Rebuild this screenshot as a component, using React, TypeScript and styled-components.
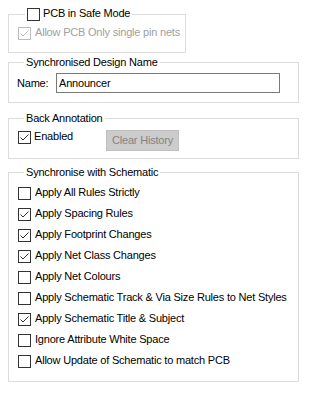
import React from 'react';
import styled, { createGlobalStyle } from 'styled-components';

const GlobalStyle = createGlobalStyle`
  html, body {
    margin: 0;
    padding: 0;
    background: #ffffff;
  }
  body {
    font-family: 'Liberation Sans', Arial, sans-serif;
    font-size: 11px;
    letter-spacing: -0.2px;
    color: #000000;
  }
`;

const Page = styled.div`
  width: 314px;
  height: 400px;
  box-sizing: border-box;
  padding: 0 0 0 8px;
  display: flex;
  flex-direction: column;
  background: #ffffff;
`;

const GroupBox = styled.fieldset<{ $w: number; $h: number; $mt: number; $pt: number }>`
  margin: ${(p) => p.$mt}px 0 0 0;
  padding: ${(p) => p.$pt}px 0 0 9px;
  width: ${(p) => p.$w}px;
  height: ${(p) => p.$h}px;
  box-sizing: border-box;
  border: 1px solid #dcdcdc;
  min-width: 0;
  display: flex;
  flex-direction: column;
`;

const Legend = styled.legend<{ $ml?: number }>`
  margin-left: ${(p) => p.$ml ?? 6}px;
  padding: 0 2px;
  height: 14px;
  line-height: 14px;
  display: flex;
  align-items: center;
  white-space: nowrap;
`;

const CheckRow = styled.label<{ $disabled?: boolean }>`
  display: flex;
  align-items: center;
  height: 21px;
  gap: 4px;
  line-height: 13px;
  white-space: nowrap;
  color: ${(p) => (p.$disabled ? '#a0a0a0' : '#000000')};
`;

const CheckText = styled.span`
  margin-top: -2px;
`;

const InlineCheck = styled.label`
  display: flex;
  align-items: center;
  gap: 3px;
  height: 13px;
  line-height: 13px;
`;

const FieldRow = styled.div`
  display: flex;
  align-items: center;
`;

const FieldLabel = styled.span`
  width: 39px;
  margin-left: -1px;
`;

const TextBox = styled.div`
  width: 224px;
  height: 20px;
  box-sizing: border-box;
  border: 1px solid #7a7a7a;
  padding: 0 2px;
  line-height: 18px;
`;

const ActionRow = styled.div`
  display: flex;
  align-items: flex-start;
`;

const ActionCheck = styled(InlineCheck)`
  margin-top: 1px;
  width: 88px;
`;

const FlatButton = styled.div`
  width: 73px;
  height: 21px;
  box-sizing: border-box;
  border: 1px solid #bfbfbf;
  background: #cccccc;
  color: #838383;
  display: flex;
  align-items: center;
  justify-content: center;
  line-height: 19px;
`;

const Box = ({ checked, disabled }: { checked?: boolean; disabled?: boolean }) => {
  const stroke = disabled ? '#bcbcbc' : '#333333';
  return (
    <svg width="13" height="13" viewBox="0 0 13 13" style={{ flex: 'none' }}>
      <rect x="0.5" y="0.5" width="12" height="12" fill="#ffffff" stroke={stroke} />
      {checked && (
        <path d="M2.5 6.5 L5 9 L10.5 3.5" fill="none" stroke={stroke} strokeWidth="1" />
      )}
    </svg>
  );
};

const schematicOptions: { label: string; checked: boolean }[] = [
  { label: 'Apply All Rules Strictly', checked: false },
  { label: 'Apply Spacing Rules', checked: true },
  { label: 'Apply Footprint Changes', checked: true },
  { label: 'Apply Net Class Changes', checked: true },
  { label: 'Apply Net Colours', checked: false },
  { label: 'Apply Schematic Track & Via Size Rules to Net Styles', checked: false },
  { label: 'Apply Schematic Title & Subject', checked: true },
  { label: 'Ignore Attribute White Space', checked: false },
  { label: 'Allow Update of Schematic to match PCB', checked: false },
];

export default function App() {
  return (
    <>
      <GlobalStyle />
      <Page>
        <GroupBox $w={178} $h={46} $mt={7} $pt={2}>
          <Legend $ml={7}>
            <InlineCheck>
              <Box />
              <CheckText>PCB in Safe Mode</CheckText>
            </InlineCheck>
          </Legend>
          <CheckRow $disabled>
            <Box checked disabled />
            <CheckText>Allow PCB Only single pin nets</CheckText>
          </CheckRow>
        </GroupBox>

        <GroupBox $w={291} $h={48} $mt={2} $pt={4}>
          <Legend>Synchronised Design Name</Legend>
          <FieldRow>
            <FieldLabel>Name:</FieldLabel>
            <TextBox>Announcer</TextBox>
          </FieldRow>
        </GroupBox>

        <GroupBox $w={291} $h={48} $mt={8} $pt={5}>
          <Legend>Back Annotation</Legend>
          <ActionRow>
            <ActionCheck>
              <Box checked />
              <CheckText>Enabled</CheckText>
            </ActionCheck>
            <FlatButton>Clear History</FlatButton>
          </ActionRow>
        </GroupBox>

        <GroupBox $w={291} $h={217} $mt={6} $pt={4}>
          <Legend>Synchronise with Schematic</Legend>
          {schematicOptions.map((o) => (
            <CheckRow key={o.label}>
              <Box checked={o.checked} />
              <CheckText>{o.label}</CheckText>
            </CheckRow>
          ))}
        </GroupBox>
      </Page>
    </>
  );
}
